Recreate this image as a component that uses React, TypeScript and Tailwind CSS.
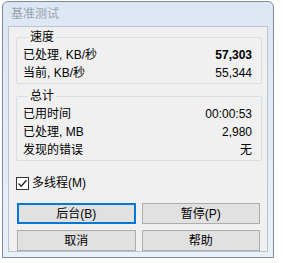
import React from "react";

const cjk = "font-['Liberation_Sans','Noto_Sans_CJK_SC',sans-serif]";

function Row({ label, value, bold }: { label: string; value: string; bold?: boolean }) {
  return (
    <div className="flex h-[18px] items-center justify-between">
      <span className="text-[12px] text-[#000]">{label}</span>
      <span className={`text-[12px] text-[#000] ${bold ? "font-bold" : ""}`}>{value}</span>
    </div>
  );
}

function Group({ title, children }: { title: string; children: React.ReactNode }) {
  return (
    <fieldset className="ml-[7px] mr-[5px] rounded-[2px] border border-[#d5dfe5] pl-[6px] pr-[9px] pb-[1px]">
      <legend className="ml-[5px] px-[2px] text-[12px] leading-[16px] text-[#000]">{title}</legend>
      <div className="pt-[1px]">{children}</div>
    </fieldset>
  );
}

function Btn({ label, focus }: { label: string; focus?: boolean }) {
  return (
    <button
      className={`flex h-[21px] items-center justify-center bg-[#e1e1e1] text-[12px] text-[#000] ${
        focus ? "border-2 border-[#0078d7]" : "border border-[#adadad]"
      }`}
    >
      {label}
    </button>
  );
}

export default function App() {
  return (
    <div className={`h-[263px] w-[283px] bg-white pl-[2px] pt-[1px] ${cjk}`}>
      <div className="flex h-[257px] w-[272px] flex-col rounded-t-[6px] border border-[#7f8a96] bg-gradient-to-b from-[#dde7f3] to-[#e9f0f8]">
        <div className="flex h-[25px] items-center pl-[8px] text-[12px] text-[#9aa3ad]">基准测试</div>
        <div className="mx-[5px] mb-[5px] flex flex-1 flex-col border border-[#b8c4d2] bg-[#f0f0f0]">
          <div className="pt-[2px]">
            <Group title="速度">
              <Row label="已处理, KB/秒" value="57,303" bold />
              <Row label="当前, KB/秒" value="55,344" />
            </Group>
          </div>
          <div className="mt-[4px]">
            <Group title="总计">
              <Row label="已用时间" value="00:00:53" />
              <Row label="已处理, MB" value="2,980" />
              <Row label="发现的错误" value="无" />
            </Group>
          </div>
          <div className="ml-[7px] mt-[13px] flex items-center gap-[3px]">
            <span className="flex h-[13px] w-[13px] items-center justify-center border border-[#333] bg-white">
              <svg width="11" height="11" viewBox="0 0 11 11">
                <path d="M1.5 5.5 L4.2 8.2 L9.5 2.2" fill="none" stroke="#222" strokeWidth="1.3" />
              </svg>
            </span>
            <span className="text-[12px] text-[#000]">多线程(M)</span>
          </div>
          <div className="ml-[8px] mt-[11px] grid w-[243px] grid-cols-2 gap-x-[6px] gap-y-[6px]">
            <Btn label="后台(B)" focus />
            <Btn label="暂停(P)" />
            <Btn label="取消" />
            <Btn label="帮助" />
          </div>
        </div>
      </div>
    </div>
  );
}
